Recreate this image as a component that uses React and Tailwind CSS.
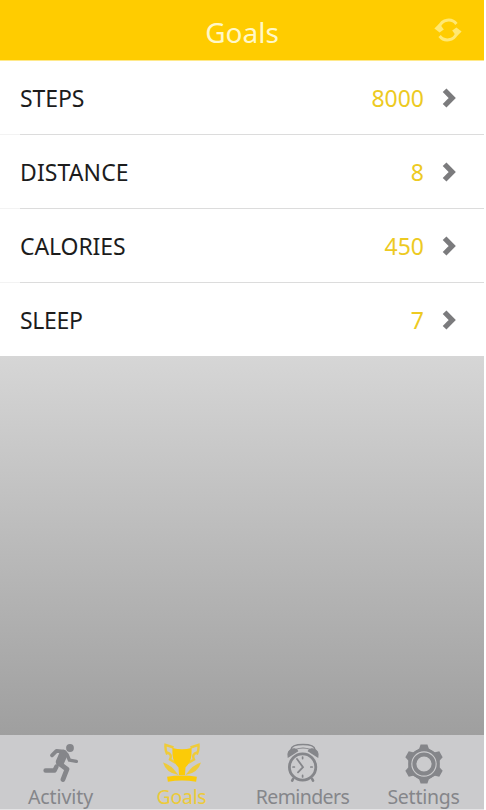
import clsx from 'clsx'

const goals = [
  { label: 'STEPS', value: '8000', tracking: 'tracking-[-0.1px]' },
  { label: 'DISTANCE', value: '8', tracking: 'tracking-[0.1px]' },
  { label: 'CALORIES', value: '450', tracking: 'tracking-[-0.1px]' },
  { label: 'SLEEP', value: '7', tracking: 'tracking-[-0.3px]' },
]

const tabs = [
  { label: 'Activity', icon: RunnerIcon, tracking: 'tracking-[-0.1px]' },
  { label: 'Goals', icon: TrophyIcon, active: true, tracking: 'tracking-[-0.3px]' },
  { label: 'Reminders', icon: AlarmIcon, tracking: 'tracking-[-0.6px]' },
  { label: 'Settings', icon: GearIcon, tracking: 'tracking-[-0.25px]' },
]

export default function App() {
  return (
    <div className="h-[810px] w-[486px] overflow-hidden bg-white font-['Noto_Sans',sans-serif]">
      <div className="flex h-full w-[484px] flex-col">
        <header className="grid h-[61px] shrink-0 grid-cols-[1fr_auto_1fr] items-center border-b border-[#ffe98a] bg-[#ffcc00]">
          <h1 className="col-start-2 pt-1 text-[28px] leading-none text-[#fff8c8]">Goals</h1>
          <button className="mr-[22px] justify-self-end" aria-label="Sync">
            <SyncIcon />
          </button>
        </header>

        <main className="flex flex-1 flex-col">
          <ul className="bg-white">
            {goals.map((goal, i) => (
              <GoalRow key={goal.label} goal={goal} last={i === goals.length - 1} />
            ))}
          </ul>
          <div className="flex-1 bg-linear-to-b from-[#d6d6d6] to-[#9f9f9f]" />
        </main>

        <nav className="grid h-[75px] shrink-0 grid-cols-4 border-b border-[#e4e4e5] bg-[#cbcbcd]">
          {tabs.map((tab) => (
            <Tab key={tab.label} tab={tab} />
          ))}
        </nav>
      </div>
    </div>
  )
}

function GoalRow({ goal, last }) {
  return (
    <li className={clsx('flex flex-col', last ? 'h-[73px]' : 'h-[74px]')}>
      <div className="flex flex-1 items-center pr-[27px] pl-5">
        <span className={clsx('pt-0.5 text-[23px] leading-none text-[#1c1c1c]', goal.tracking)}>{goal.label}</span>
        <span className="ml-auto pt-0.5 text-[23px] leading-none text-[#edca22]">{goal.value}</span>
        <ChevronIcon />
      </div>
      {!last && (
        <div className="flex h-px">
          <div className="w-5 bg-[#f3f3f3]" />
          <div className="flex-1 bg-[#dcdcdc]" />
        </div>
      )}
    </li>
  )
}

function Tab({ tab }) {
  const Icon = tab.icon
  return (
    <button className={clsx('flex flex-col items-center pt-[7px]', tab.active ? 'text-[#fbcb08]' : 'text-[#85868a]')}>
      <Icon />
      <span
        className={clsx('mt-[3px] text-[19.5px] leading-[24px]', tab.tracking, tab.active && 'text-[#ecca3a]')}
      >
        {tab.label}
      </span>
    </button>
  )
}

function ChevronIcon() {
  return (
    <svg className="ml-[18px] h-5 w-[15px]" viewBox="0 0 15 20" fill="none">
      <path d="M2.6 2.2 L10.2 10 L2.6 17.8" stroke="#7b7b7d" strokeWidth="5.2" />
    </svg>
  )
}

function SyncIcon() {
  return (
    <svg className="h-6 w-7" viewBox="0 0 28 24" fill="none">
      <path d="M5.4 8.5 A9.8 9.8 0 0 1 22.4 6" stroke="#ffe873" strokeWidth="3" />
      <path d="M22.6 15.5 A9.8 9.8 0 0 1 5.6 18" stroke="#ffe873" strokeWidth="3" />
      <path d="M0.4 10.6 L5.4 5.4 L9.8 11.6 L5.6 14.4 Z" fill="#ffe873" />
      <path d="M27.6 13.4 L22.6 18.6 L18.2 12.4 L22.4 9.6 Z" fill="#ffe873" />
    </svg>
  )
}

function RunnerIcon() {
  return (
    <svg className="h-[40px] w-[40px]" viewBox="0 0 40 40" fill="none" stroke="currentColor" strokeLinecap="round" strokeLinejoin="round">
      <circle cx="29" cy="6" r="3.9" fill="currentColor" stroke="none" />
      <path d="M11 13.3 L15.5 8.8 L23 9.6" strokeWidth="3.8" />
      <path d="M22.5 12 L19 20" strokeWidth="8.4" />
      <path d="M26 12.5 L28.5 18.2 L35.4 19.4" strokeWidth="3.4" />
      <path d="M19 22 L26 27.2 L22 37.4" strokeWidth="4.8" />
      <path d="M15.5 24.5 L13.5 28.6 L4.6 28.6" strokeWidth="4.5" />
    </svg>
  )
}

function TrophyIcon() {
  return (
    <svg className="h-[40px] w-[40px]" viewBox="0 0 40 40" fill="none" stroke="currentColor">
      <path d="M10.5 6 Q20 8.5 29.5 6 C30 16 28.5 20.5 23.5 25.5 L23 33 H17 L16.5 25.5 C11.5 20.5 10 16 10.5 6 Z" fill="currentColor" stroke="none" />
      <g opacity=".75">
        <path d="M11.5 5.5 L3.5 2.8 Q3 8 5.2 12.5 M5 10.5 Q10.5 12 8 17.5 L14 21" strokeWidth="2.4" />
        <path d="M28.5 5.5 L36.5 2.8 Q37 8 34.8 12.5 M35 10.5 Q29.5 12 32 17.5 L26 21" strokeWidth="2.4" />
        <path d="M1 20.5 Q8 23 11.5 27 L16.5 33 Q4 31 1 20.5 Z" fill="currentColor" stroke="none" />
        <path d="M39 20.5 Q32 23 28.5 27 L23.5 33 Q36 31 39 20.5 Z" fill="currentColor" stroke="none" />
      </g>
      <path d="M5.5 37.2 Q20 35 34.5 37.2" strokeWidth="5" />
    </svg>
  )
}

function AlarmIcon() {
  return (
    <svg className="h-[40px] w-[40px]" viewBox="0 0 40 40" fill="none" stroke="currentColor" strokeLinecap="round">
      <path d="M8 7.5 Q8.5 2.5 20 2.5 Q31.5 2.5 32 7.5" strokeWidth="1.4" />
      <path d="M12.5 7.5 Q20 4.5 27.5 7.5" strokeWidth="1.2" />
      <path d="M5.2 15 Q4 8.5 9.5 7 Q13.5 6 14.6 9 Z" fill="currentColor" strokeWidth="1.2" />
      <path d="M34.8 15 Q36 8.5 30.5 7 Q26.5 6 25.4 9 Z" fill="currentColor" strokeWidth="1.2" />
      <circle cx="19.6" cy="25" r="13.2" strokeWidth="2.8" />
      <path d="M14 17 L20 25.2 L15 30.4" strokeWidth="1.8" />
      <path d="M19.6 15 V16.6 M19.6 33.4 V35 M10 25 H11.4 M27.8 25 H29.2" strokeWidth="1.7" />
      <path d="M10 37 L9.2 38.6 M29.2 37 L30 38.6" strokeWidth="2.6" />
    </svg>
  )
}

function GearIcon() {
  return (
    <svg className="-mb-0.5 h-[42px] w-[40px]" viewBox="0 0 40 42" fill="none" stroke="currentColor">
      <circle cx="20" cy="22" r="14.2" strokeWidth="3" />
      <circle cx="20" cy="22" r="9.6" strokeWidth="4" />
      {[0, 60, 120, 180, 240, 300].map((angle) => (
        <path
          key={angle}
          d="M16.6 2.4 H23.4 L24.8 6.6 L29 9.8 L20 8.6 L11 9.8 L15.2 6.6 Z"
          fill="currentColor"
          stroke="none"
          transform={`rotate(${angle} 20 22)`}
        />
      ))}
    </svg>
  )
}
